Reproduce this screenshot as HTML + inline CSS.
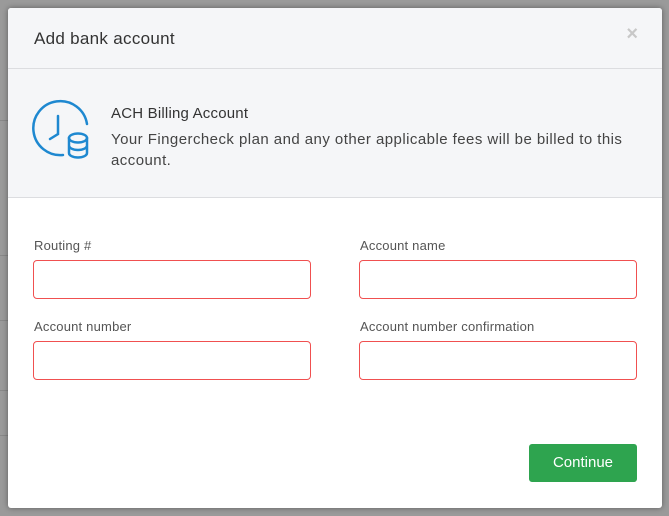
<!DOCTYPE html>
<html><head><style>
body{margin:0;width:669px;height:516px;background:#9a9a9a;position:relative;overflow:hidden;font-family:"Liberation Sans",sans-serif;}
.line{position:absolute;left:0;width:9px;height:1px;background:#888}
.modal{position:absolute;left:8px;top:8px;width:654px;height:500px;background:#fff;border-radius:3px;box-shadow:0 0 6px rgba(0,0,0,.4);overflow:hidden}
.hdr{height:60px;background:#f5f6f8;border-bottom:1px solid #dcdde0;position:relative}
.hdr .t{position:absolute;left:26px;top:21px;font-size:17px;color:#333;letter-spacing:.3px}
.hdr .x{position:absolute;right:24px;top:15px;font-size:20px;color:#c8c8c8;font-weight:bold}
.info{height:128px;background:#f5f6f8;border-bottom:1px solid #dcdde0;position:relative}
.info svg{position:absolute;left:17px;top:22px}
.info .h{position:absolute;left:103px;top:36px;font-size:15px;color:#333;letter-spacing:.2px}
.info .p{position:absolute;left:103px;top:60px;font-size:15px;color:#444;line-height:21px;width:545px;letter-spacing:.45px}
.lab{position:absolute;font-size:13px;color:#555;letter-spacing:.2px}
.in{position:absolute;width:278px;height:39px;border:1.5px solid #f05050;border-radius:4px;box-sizing:border-box}
.btn{position:absolute;left:521px;top:436px;width:108px;height:38px;background:#2ea44f;border-radius:3px;color:#fff;font-size:15px;text-align:center;line-height:38px}
</style></head><body>
<div class="line" style="top:120px"></div><div class="line" style="top:255px"></div><div class="line" style="top:320px"></div><div class="line" style="top:390px"></div><div class="line" style="top:435px"></div>
<div class="modal">
<div class="hdr"><div class="t">Add bank account</div><div class="x">×</div></div>
<div class="info">
<svg width="70" height="72" viewBox="0 0 70 72" fill="none" stroke="#1e88d0" stroke-width="2.5" stroke-linecap="round">
<path d="M62 33 A27 27 0 1 0 38 64"/>
<path d="M33 25 V43 L25 48"/>
<ellipse cx="53" cy="47" rx="9" ry="4.5"/>
<path d="M44 47 V62 A9 4.5 0 0 0 62 62 V47 M44 54.5 A9 4.5 0 0 0 62 54.5"/>
</svg>
<div class="h">ACH Billing Account</div>
<div class="p">Your Fingercheck plan and any other applicable fees will be billed to this account.</div>
</div>
<div class="lab" style="left:26px;top:230px">Routing #</div>
<div class="lab" style="left:352px;top:230px">Account name</div>
<div class="in" style="left:25px;top:252px"></div>
<div class="in" style="left:351px;top:252px"></div>
<div class="lab" style="left:26px;top:311px">Account number</div>
<div class="lab" style="left:352px;top:311px">Account number confirmation</div>
<div class="in" style="left:25px;top:333px"></div>
<div class="in" style="left:351px;top:333px"></div>
<div class="btn">Continue</div>
</div>
</body></html>
